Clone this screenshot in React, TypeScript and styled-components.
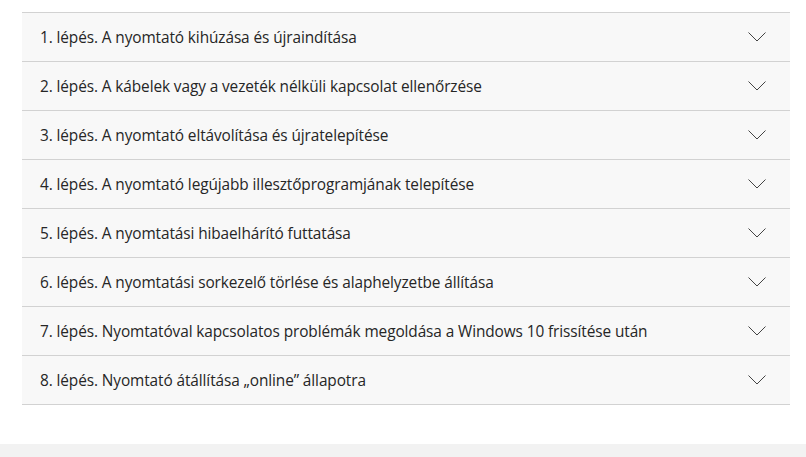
import React from 'react';
import styled, { createGlobalStyle } from 'styled-components';

const GlobalStyle = createGlobalStyle`
    html, body {
        margin: 0;
        padding: 0;
        background: #fff;
    }
    body {
        font-family: 'Open Sans', 'Noto Sans', sans-serif;
    }
`;

const Page = styled.div`
    display: flex;
    flex-direction: column;
    width: 806px;
    height: 457px;
    overflow: hidden;
`;

const Content = styled.div`
    flex: 1;
    padding: 12px 16px 0 22px;
`;

const List = styled.div`
    display: flex;
    flex-direction: column;
    border-top: 1px solid #d2d2d2;
`;

const Row = styled.div`
    display: flex;
    align-items: center;
    justify-content: space-between;
    height: 48px;
    padding: 0 24px 0 18px;
    background: #f8f8f8;
    border-bottom: 1px solid #d2d2d2;
    cursor: pointer;
`;

const Title = styled.span`
    font-size: 15.4px;
    color: #262626;
    letter-spacing: -0.1px;
`;

const Footer = styled.div`
    height: 13px;
    background: #f2f2f2;
`;

const Chevron = () => (
    <svg width="18" height="10" viewBox="0 0 18 10" fill="none">
        <path d="M0.5 0.5 L9 9 L17.5 0.5" stroke="#444" strokeWidth="1" />
    </svg>
);

const steps = [
    '1. lépés. A nyomtató kihúzása és újraindítása',
    '2. lépés. A kábelek vagy a vezeték nélküli kapcsolat ellenőrzése',
    '3. lépés. A nyomtató eltávolítása és újratelepítése',
    '4. lépés. A nyomtató legújabb illesztőprogramjának telepítése',
    '5. lépés. A nyomtatási hibaelhárító futtatása',
    '6. lépés. A nyomtatási sorkezelő törlése és alaphelyzetbe állítása',
    '7. lépés. Nyomtatóval kapcsolatos problémák megoldása a Windows 10 frissítése után',
    '8. lépés. Nyomtató átállítása „online” állapotra',
];

export default function App() {
    return (
        <>
            <GlobalStyle />
            <Page>
                <Content>
                    <List>
                        {steps.map((step) => (
                            <Row key={step}>
                                <Title>{step}</Title>
                                <Chevron />
                            </Row>
                        ))}
                    </List>
                </Content>
                <Footer />
            </Page>
        </>
    );
}
